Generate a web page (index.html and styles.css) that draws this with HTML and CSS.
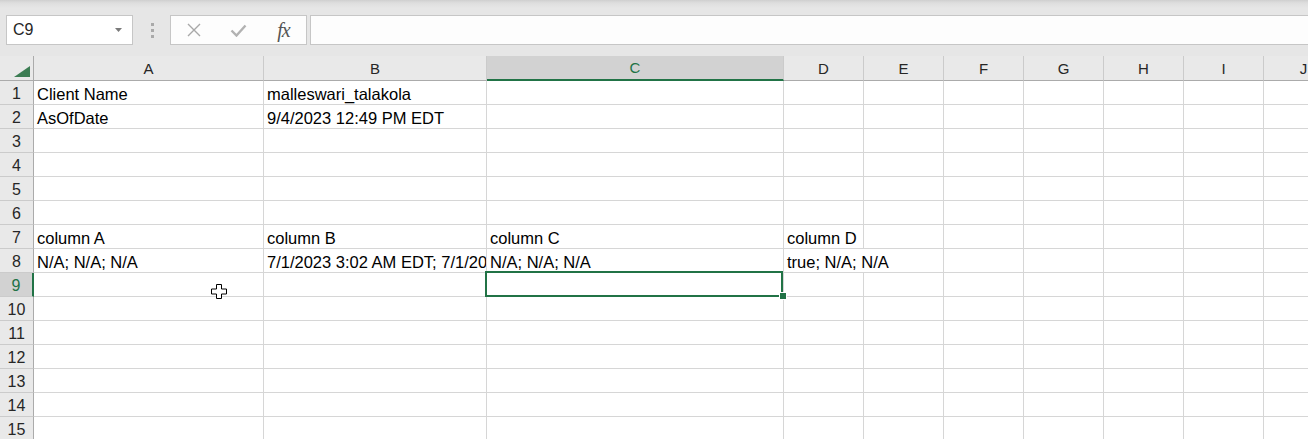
FILE: index.html
```html
<!DOCTYPE html>
<html lang="en">
<head>
  <meta charset="UTF-8">
  <meta name="viewport" content="width=device-width, initial-scale=1.0">
  <title>Book1 - Excel</title>
  <link rel="stylesheet" href="styles.css">
</head>
<body>
  <div class="toolbar">
    <div class="name-box">
      <span>C9</span>
      <svg class="caret" width="7" height="4" viewBox="0 0 7 4"><path d="M0 0h7L3.5 4z" fill="#7a7a7a"/></svg>
    </div>
    <div class="grip"><span></span><span></span><span></span></div>
    <div class="fx-box">
      <svg width="14" height="14" viewBox="0 0 14 14"><path d="M1 1l12 12M13 1L1 13" stroke="#a8a8a8" stroke-width="1.4" fill="none"/></svg>
      <svg width="17" height="13" viewBox="0 0 17 13"><path d="M1.5 6.5l5 5 9-10" stroke="#b2b2b2" stroke-width="2.4" fill="none"/></svg>
      <span class="fx">fx</span>
    </div>
    <div class="formula"></div>
  </div>

  <div class="sheet">
    <div class="corner"><svg width="16" height="11" viewBox="0 0 16 11"><path d="M16 0v11H0z" fill="#3c7d53"/></svg></div>
    <div class="ch">A</div><div class="ch">B</div><div class="ch sel">C</div><div class="ch">D</div><div class="ch">E</div><div class="ch">F</div><div class="ch">G</div><div class="ch">H</div><div class="ch">I</div><div class="ch">J</div>

    <div class="rh">1</div><div class="c">Client Name</div><div class="c">malleswari_talakola</div><div class="c"></div><div class="c"></div><div class="c"></div><div class="c"></div><div class="c"></div><div class="c"></div><div class="c"></div><div class="c"></div>
    <div class="rh">2</div><div class="c">AsOfDate</div><div class="c">9/4/2023 12:49 PM EDT</div><div class="c"></div><div class="c"></div><div class="c"></div><div class="c"></div><div class="c"></div><div class="c"></div><div class="c"></div><div class="c"></div>
    <div class="rh">3</div><div class="c"></div><div class="c"></div><div class="c"></div><div class="c"></div><div class="c"></div><div class="c"></div><div class="c"></div><div class="c"></div><div class="c"></div><div class="c"></div>
    <div class="rh">4</div><div class="c"></div><div class="c"></div><div class="c"></div><div class="c"></div><div class="c"></div><div class="c"></div><div class="c"></div><div class="c"></div><div class="c"></div><div class="c"></div>
    <div class="rh">5</div><div class="c"></div><div class="c"></div><div class="c"></div><div class="c"></div><div class="c"></div><div class="c"></div><div class="c"></div><div class="c"></div><div class="c"></div><div class="c"></div>
    <div class="rh">6</div><div class="c"></div><div class="c"></div><div class="c"></div><div class="c"></div><div class="c"></div><div class="c"></div><div class="c"></div><div class="c"></div><div class="c"></div><div class="c"></div>
    <div class="rh">7</div><div class="c">column A</div><div class="c">column B</div><div class="c">column C</div><div class="c">column D</div><div class="c"></div><div class="c"></div><div class="c"></div><div class="c"></div><div class="c"></div><div class="c"></div>
    <!-- D8 spills over the empty E8, so it takes both columns -->
    <div class="rh">8</div><div class="c">N/A; N/A; N/A</div><div class="c">7/1/2023 3:02 AM EDT; 7/1/2023 3:02 AM EDT; 7/1/2023 3:02 AM EDT</div><div class="c">N/A; N/A; N/A</div><div class="c span2">true; N/A; N/A</div><div class="c"></div><div class="c"></div><div class="c"></div><div class="c"></div><div class="c"></div>
    <div class="rh sel">9</div><div class="c"></div><div class="c"></div><div class="c active"></div><div class="c"></div><div class="c"></div><div class="c"></div><div class="c"></div><div class="c"></div><div class="c"></div><div class="c"></div>
    <div class="rh">10</div><div class="c"></div><div class="c"></div><div class="c"></div><div class="c"></div><div class="c"></div><div class="c"></div><div class="c"></div><div class="c"></div><div class="c"></div><div class="c"></div>
    <div class="rh">11</div><div class="c"></div><div class="c"></div><div class="c"></div><div class="c"></div><div class="c"></div><div class="c"></div><div class="c"></div><div class="c"></div><div class="c"></div><div class="c"></div>
    <div class="rh">12</div><div class="c"></div><div class="c"></div><div class="c"></div><div class="c"></div><div class="c"></div><div class="c"></div><div class="c"></div><div class="c"></div><div class="c"></div><div class="c"></div>
    <div class="rh">13</div><div class="c"></div><div class="c"></div><div class="c"></div><div class="c"></div><div class="c"></div><div class="c"></div><div class="c"></div><div class="c"></div><div class="c"></div><div class="c"></div>
    <div class="rh">14</div><div class="c"></div><div class="c"></div><div class="c"></div><div class="c"></div><div class="c"></div><div class="c"></div><div class="c"></div><div class="c"></div><div class="c"></div><div class="c"></div>
    <div class="rh">15</div><div class="c"></div><div class="c"></div><div class="c"></div><div class="c"></div><div class="c"></div><div class="c"></div><div class="c"></div><div class="c"></div><div class="c"></div><div class="c"></div>

    <svg class="pointer" width="16" height="15" viewBox="0 0 16 15"><path d="M5.5 0.5h5v4.5h5v5h-5v4.5h-5v-4.5h-5v-5h5z" fill="#fff" stroke="#000"/></svg>
  </div>
</body>
</html>
```

FILE: styles.css
```css
* {
  margin: 0;
  padding: 0;
  box-sizing: border-box;
}

body {
  width: 1308px;
  height: 439px;
  overflow: hidden;
  background: #fff;
  font-family: 'Liberation Sans', Arial, sans-serif;
  color: #1f1f1f;
}

/* name box + formula bar */
.toolbar {
  height: 56px;
  display: flex;
  align-items: flex-start;
  padding: 15px 0 0 6px;
  overflow: hidden;
  background: linear-gradient(#cfcfcf 0, #dadada 2px, #e0e0e0 4px, #e6e6e6 8px);
}

.name-box {
  width: 127px;
  height: 30px;
  display: flex;
  align-items: center;
  justify-content: space-between;
  padding: 0 10px 0 6px;
  background: #fff;
  border: 1px solid #c6c6c6;
  font-size: 16px;
  color: #262626;
}

.grip {
  display: flex;
  flex-direction: column;
  gap: 3px;
  margin: 8px 0 0 18px;
}

.grip span {
  width: 3px;
  height: 3px;
  background: #a9a9a9;
}

.fx-box {
  width: 137px;
  height: 30px;
  margin-left: 16px;
  display: grid;
  grid-template-columns: repeat(3, 1fr);
  align-items: center;
  justify-items: center;
  background: #fdfdfd;
  border: 1px solid #c6c6c6;
}

.fx {
  font-family: 'Liberation Serif', 'Times New Roman', serif;
  font-style: italic;
  font-size: 20px;
  color: #555;
  letter-spacing: -1px;
}

.formula {
  flex: 1;
  height: 30px;
  margin: 0 -10px 0 3px;
  background: #fdfdfd;
  border: 1px solid #c6c6c6;
}

/* grid */
.sheet {
  position: relative;
  display: grid;
  grid-template-columns: 34px 230px 223px 297px repeat(7, 80px);
  grid-template-rows: 25px repeat(15, 24px);
  width: 1344px;
}

.corner,
.ch,
.rh {
  background: #e9e9e9;
  color: #262626;
}

.corner {
  display: flex;
  align-items: flex-end;
  justify-content: flex-end;
  padding: 0 3px 3px 0;
  border-right: 1px solid #ababab;
  border-bottom: 1px solid #ababab;
}

.ch {
  display: flex;
  align-items: center;
  justify-content: center;
  font-size: 15px;
  border-right: 1px solid #cbcbcb;
  border-bottom: 1px solid #ababab;
}

.ch.sel {
  background: #d2d2d2;
  color: #217346;
  border-bottom: 2px solid #217346;
}

.rh {
  text-align: center;
  font-size: 16px;
  line-height: 20px;
  padding-top: 3px;
  border-right: 1px solid #ababab;
  border-bottom: 1px solid #cbcbcb;
}

.rh.sel {
  background: #d2d2d2;
  color: #217346;
  border-right: 2px solid #217346;
}

.c {
  font-size: 16.5px;
  line-height: 20px;
  padding: 3px 0 0 3px;
  white-space: nowrap;
  overflow: hidden;
  color: #000;
  border-right: 1px solid #d6d6d6;
  border-bottom: 1px solid #d6d6d6;
}

.c.span2 {
  grid-column: span 2;
}

.c.active {
  position: relative;
  overflow: visible;
}

.c.active::after {
  content: "";
  position: absolute;
  top: -2px;
  left: -2px;
  right: 0;
  bottom: -1px;
  border: 2px solid #217346;
}

.c.active::before {
  content: "";
  position: absolute;
  right: -3px;
  bottom: -3px;
  width: 6px;
  height: 6px;
  background: #217346;
  outline: 1px solid #fff;
  z-index: 1;
}

.pointer {
  position: absolute;
  left: 211px;
  top: 228px;
}
```
